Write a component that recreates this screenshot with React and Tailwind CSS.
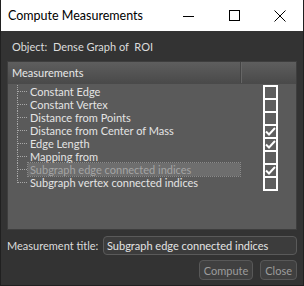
import React from 'react';

const items = [
    { name: 'Constant Edge', checked: false },
    { name: 'Constant Vertex', checked: false },
    { name: 'Distance from Points', checked: false },
    { name: 'Distance from Center of Mass', checked: true },
    { name: 'Edge Length', checked: true },
    { name: 'Mapping from', checked: false },
    { name: 'Subgraph edge connected indices', checked: true, selected: true },
    { name: 'Subgraph vertex connected indices', checked: false },
];

function TreeLines({ last }) {
    return (
        <svg width="11" height="13" className="shrink-0">
            <line x1="0.5" y1="0" x2="0.5" y2={last ? 7 : 13} stroke="#a8a8a8" strokeDasharray="1 1" />
            <line x1="1" y1="6.5" x2="10" y2="6.5" stroke="#a8a8a8" strokeDasharray="1 1" />
        </svg>
    );
}

function Check({ checked, last }) {
    return (
        <div className={`w-[15px] border-x-2 border-t-2 border-white bg-[#5e5e5e] flex items-center justify-center ${last ? 'h-[15px] border-b-2' : 'h-[13px]'}`}>
            {checked && (
                <svg width="11" height="9" viewBox="0 0 11 9">
                    <path d="M1 4.5 L4 7.5 L10 1" stroke="white" strokeWidth="2" fill="none" />
                </svg>
            )}
        </div>
    );
}

export default function App() {
    return (
        <div className="w-[304px] h-[286px] flex flex-col bg-[#333333] border-x border-b border-[#202020] text-[11px] leading-[13px]" style={{ fontFamily: 'Lato, "Open Sans", sans-serif' }}>
            {/* title bar */}
            <div className="h-[31px] bg-white flex items-center shrink-0">
                <span className="pl-[7px] text-[12.5px] text-black flex-1">Compute Measurements</span>
                <div className="w-[46px] flex justify-center">
                    <div className="w-[11px] h-px bg-black mt-[1px]"></div>
                </div>
                <div className="w-[46px] flex justify-center">
                    <div className="w-[11px] h-[11px] border border-black"></div>
                </div>
                <div className="w-[46px] flex justify-center">
                    <svg width="12" height="12" viewBox="0 0 12 12">
                        <path d="M0.5 0.5 L11.5 11.5 M11.5 0.5 L0.5 11.5" stroke="black" strokeWidth="1" />
                    </svg>
                </div>
            </div>

            <div className="flex-1 flex flex-col px-[6px]">
                <div className="h-[30px] flex items-center pl-[5px] text-[#dcdcdc]">
                    Object:&nbsp; Dense Graph of&nbsp; ROI
                </div>

                {/* tree */}
                <div className="h-[169px] bg-[#5a5a5a] border border-[#3e3e3e] flex flex-col">
                    <div className="h-[22px] flex shrink-0 bg-gradient-to-b from-[#5e5e5e] to-[#4a4a4a] border-b border-[#4a4a4a]">
                        <div className="w-[233px] flex items-center pl-[4px] text-[#e8e8e8] border-r border-[#444444]">Measurements</div>
                        <div className="flex-1 border-l border-[#666666]"></div>
                    </div>
                    <div className="flex pt-[1px]">
                        <div className="w-[233px] flex flex-col pl-[9px]">
                            {items.map((it, i) => (
                                <div key={it.name} className="h-[13px] flex items-center">
                                    <TreeLines last={i === items.length - 1} />
                                    <div className="flex-1 pr-[1px]">
                                        <span className={`block h-[13px] leading-[13px] pl-[2px] whitespace-nowrap ${it.selected ? 'bg-[#6e6e6e] text-[#a4a4a4] outline outline-1 outline-dotted outline-[#8a8a8a]' : 'text-[#e4e4e4]'}`}>
                                            {it.name}
                                        </span>
                                    </div>
                                </div>
                            ))}
                        </div>
                        <div className="flex-1 flex flex-col pl-[22px]">
                            {items.map((it, i) => (
                                <Check key={it.name} checked={it.checked} last={i === items.length - 1} />
                            ))}
                        </div>
                    </div>
                </div>

                <div className="flex items-center mt-[6px] text-[#dcdcdc]">
                    <span className="w-[96px] whitespace-nowrap">Measurement title:</span>
                    <div className="flex-1 h-[19px] rounded-[4px] bg-[#3c3c3c] border border-[#5a5a5a] flex items-center pl-[3px] text-[#e4e4e4] whitespace-nowrap overflow-hidden">
                        Subgraph edge connected indices
                    </div>
                </div>

                <div className="flex justify-end gap-[7px] mt-[5px]">
                    <button className="h-[20px] px-[4px] rounded-[4px] bg-[#404040] border border-[#585858] text-[#9c9c9c]">Compute</button>
                    <button className="h-[20px] px-[4px] rounded-[4px] bg-[#404040] border border-[#585858] text-[#9c9c9c]">Close</button>
                </div>
            </div>
        </div>
    );
}
